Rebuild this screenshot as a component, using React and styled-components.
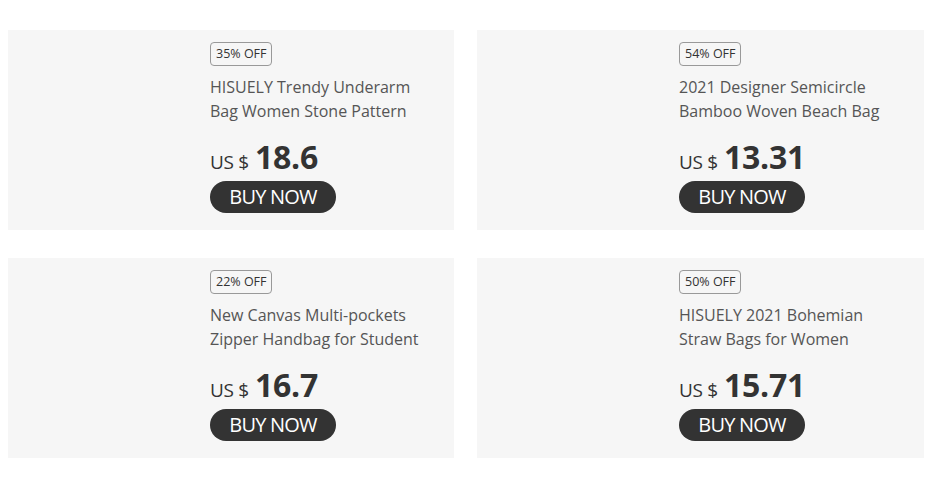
import React from 'react';
import styled, { createGlobalStyle } from 'styled-components';

const Global = createGlobalStyle`
  body {
    margin: 0;
    background: #fff;
    font-family: 'Open Sans', 'Noto Sans', sans-serif;
  }
`;

const PRODUCTS = [
  { off: 35, title: 'HISUELY Trendy Underarm Bag Women Stone Pattern', price: '18.6' },
  { off: 54, title: '2021 Designer Semicircle Bamboo Woven Beach Bag', price: '13.31' },
  { off: 22, title: 'New Canvas Multi-pockets Zipper Handbag for Student', price: '16.7' },
  { off: 50, title: 'HISUELY 2021 Bohemian Straw Bags for Women', price: '15.71' },
];

const App = () => {
  return (
    <>
      <Global />
      <Grid>
        {PRODUCTS.map((p, idx) => (
          <Card key={idx}>
            <Thumb />
            <Info>
              <Badge>{p.off}% OFF</Badge>
              <Title>{p.title}</Title>
              <Price>
                <Currency>US $</Currency>
                <Amount>{p.price}</Amount>
              </Price>
              <BuyBtn>BUY NOW</BuyBtn>
            </Info>
          </Card>
        ))}
      </Grid>
    </>
  );
};

const Grid = styled.section`
  display: grid;
  grid-template-columns: 446px 447px;
  column-gap: 23px;
  row-gap: 28px;
  padding: 30px 0 0 8px;
`;
const Card = styled.div`
  display: flex;
  height: 200px;
  background: #f6f6f6;
`;
const Thumb = styled.div`
  width: 202px;
  flex-shrink: 0;
`;
const Info = styled.div`
  display: flex;
  flex-direction: column;
  align-items: flex-start;
  padding-top: 12px;
  width: 222px;
`;
const Badge = styled.span`
  box-sizing: border-box;
  height: 24px;
  padding: 0 4px 0 5px;
  border: 1px solid #999;
  border-radius: 4px;
  font-size: 12.5px;
  line-height: 22px;
  color: #333;
`;
const Title = styled.p`
  margin: 9px 0 0;
  font-size: 16px;
  line-height: 24px;
  color: #555;
`;
const Price = styled.div`
  display: flex;
  align-items: baseline;
  margin-top: 17px;
  height: 34px;
  line-height: 34px;
  color: #333;
`;
const Currency = styled.span`
  font-size: 19px;
  margin-right: 6px;
  letter-spacing: -0.3px;
`;
const Amount = styled.span`
  font-size: 32px;
  font-weight: 700;
  letter-spacing: -0.2px;
`;
const BuyBtn = styled.button`
  margin-top: 7px;
  width: 126px;
  height: 32px;
  padding: 0;
  border: none;
  border-radius: 16px;
  background: #333;
  color: #fff;
  font-family: inherit;
  font-size: 20px;
  line-height: 32px;
  letter-spacing: -0.8px;
  cursor: pointer;
`;

export default App;
